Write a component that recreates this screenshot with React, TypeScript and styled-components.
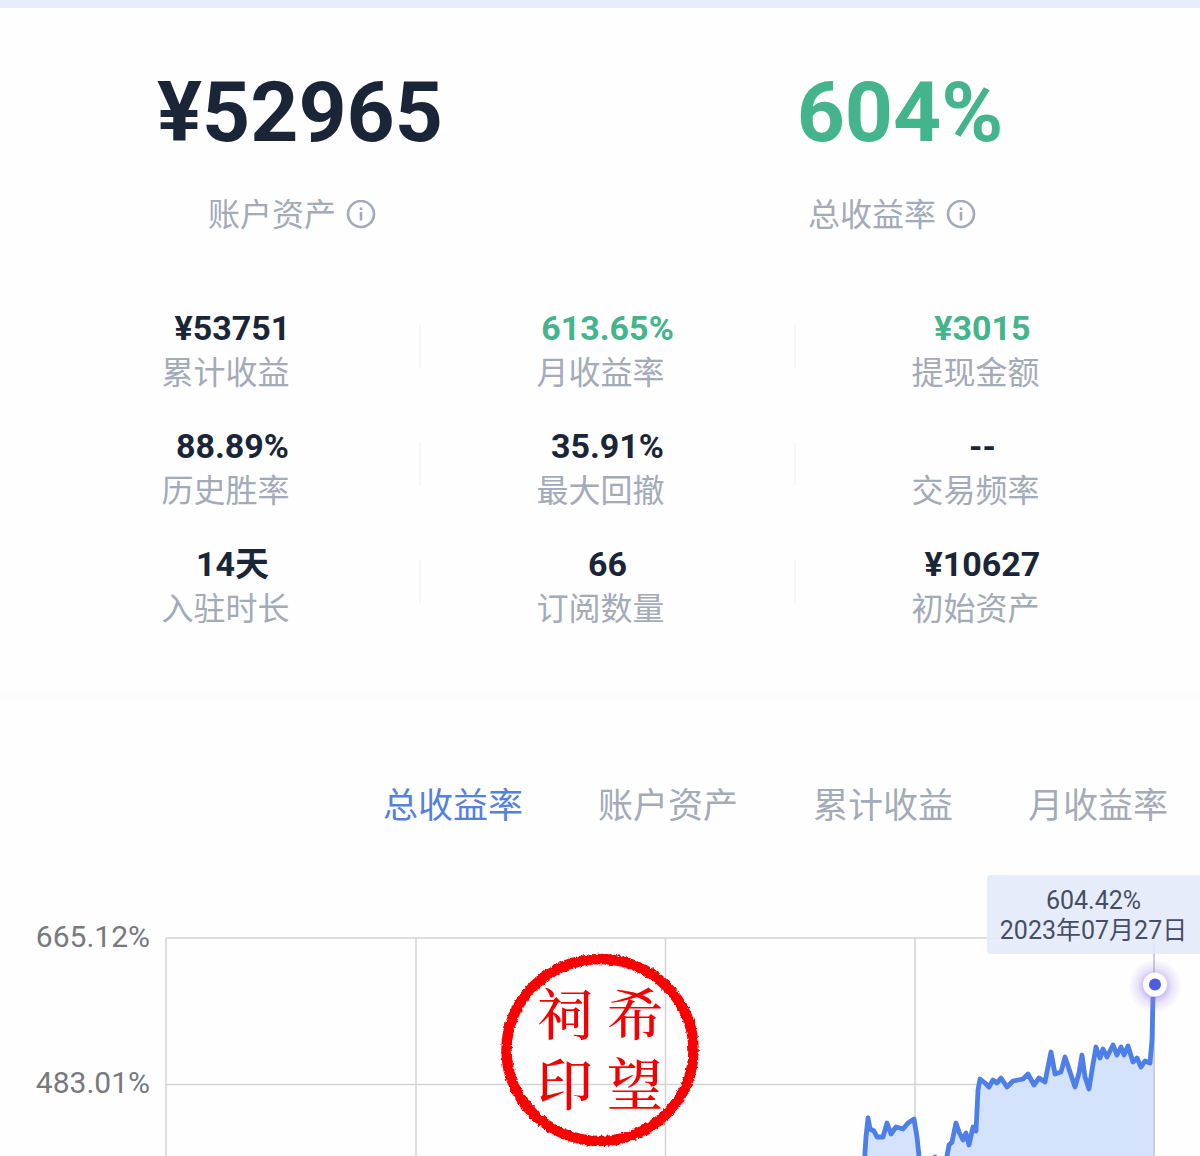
import React from "react";
import styled, { createGlobalStyle } from "styled-components";

const GlobalStyle = createGlobalStyle`
  * { box-sizing: border-box; }
  body {
    margin: 0;
    background: #fefefe;
    font-family: Roboto, "Noto Sans CJK SC", sans-serif;
    overflow-x: hidden;
  }
`;

const ink = "#1a2638";
const green = "#43b48c";
const muted = "#a3aab8";
const blue = "#5580e0";
const lineBlue = "#4d7fe8";

const Page = styled.main`
  border-top: 8px solid #e8edfb;
  overflow: hidden;
`;

const Summary = styled.section`
  display: grid;
  grid-template-columns: 1fr 1fr;
  padding-top: 55px;
`;

const SummaryItem = styled.div`
  display: flex;
  flex-direction: column;
  align-items: center;
`;

const BigValue = styled.strong<{ $color: string }>`
  font-size: 84px;
  line-height: 100px;
  font-weight: 700;
  color: ${(p) => p.$color};
`;

const SummaryLabel = styled.div`
  display: flex;
  align-items: center;
  gap: 10px;
  margin-top: 28px;
  padding-right: 16px;
  font-size: 32px;
  line-height: 48px;
  font-weight: 400;
  color: ${muted};
`;

const InfoButton = styled.button`
  display: flex;
  padding: 0;
  border: 0;
  background: none;
  color: inherit;
`;

const Stats = styled.section`
  display: grid;
  grid-template-columns: repeat(3, 1fr);
  row-gap: 28px;
  padding: 67px 30px 0 45px;
`;

const Stat = styled.div`
  position: relative;
  display: flex;
  flex-direction: column;
  align-items: center;

  &:not(:nth-child(3n))::after {
    content: "";
    position: absolute;
    right: -1px;
    top: 18px;
    width: 2px;
    height: 44px;
    background: #f7f7f9;
  }
`;

const StatValue = styled.strong<{ $color: string }>`
  font-size: 34px;
  line-height: 44px;
  font-weight: 700;
  color: ${(p) => p.$color};
`;

const StatLabel = styled.span`
  padding-right: 14px;
  font-size: 32px;
  line-height: 46px;
  font-weight: 400;
  color: ${muted};
`;

const Performance = styled.section`
  margin-top: 60px;
  border-top: 10px solid #fdfdfd;
`;

const Tabs = styled.nav`
  display: flex;
  justify-content: flex-end;
  gap: 75px;
  padding: 81px 32px 0 0;
`;

const Tab = styled.button<{ $active: boolean }>`
  padding: 0;
  border: 0;
  background: none;
  font-family: inherit;
  font-size: 35px;
  line-height: 48px;
  font-weight: 400;
  color: ${(p) => (p.$active ? blue : muted)};
`;

const Chart = styled.div`
  position: relative;
  display: flex;
  margin-top: 107px;
`;

const Axis = styled.div`
  display: flex;
  flex-direction: column;
  gap: 106px;
  width: 166px;
  height: 218px;
  margin-top: -21px;
  padding-right: 16px;
  text-align: right;
  font-size: 30px;
  line-height: 40px;
  color: #77797f;
`;

const Plot = styled.svg`
  display: block;
  flex: 1;
  min-width: 0;
  height: 218px;
  overflow: visible;
`;

const Tooltip = styled.div`
  position: absolute;
  top: -63px;
  right: 0;
  width: 213px;
  padding: 11px 0 8px;
  border-radius: 4px 0 0 4px;
  background: rgba(228, 234, 250, 0.9);
  text-align: center;
  white-space: nowrap;
  font-size: 25px;
  line-height: 30px;
  color: #454f63;
`;

const Stamp = styled.div`
  position: absolute;
  left: 50%;
  top: 12px;
  width: 200px;
  height: 200px;
  margin-left: -100px;
`;

const StampRing = styled.svg`
  position: absolute;
  inset: 0;
`;

const StampText = styled.div`
  position: relative;
  display: grid;
  grid-template-columns: 58px 58px;
  gap: 12px;
  justify-content: center;
  padding-top: 37px;
  text-align: center;
  font-family: "Liberation Serif", "Noto Serif CJK SC", "Noto Sans CJK SC", serif;
  font-size: 56px;
  line-height: 58px;
  font-weight: 500;
  color: #f50000;
`;

const StampGlyph = styled.span`
  display: block;
  height: 58px;
`;

const stats = [
  { label: "累计收益", value: "¥53751", color: ink },
  { label: "月收益率", value: "613.65%", color: green },
  { label: "提现金额", value: "¥3015", color: green },
  { label: "历史胜率", value: "88.89%", color: ink },
  { label: "最大回撤", value: "35.91%", color: ink },
  { label: "交易频率", value: "--", color: ink },
  { label: "入驻时长", value: "14天", color: ink },
  { label: "订阅数量", value: "66", color: ink },
  { label: "初始资产", value: "¥10627", color: ink },
];

const tabs = ["总收益率", "账户资产", "累计收益", "月收益率"];

const line =
  "698,230 700,199 702,180 704,191 708,193 711,199 717,199 721,185 725,196 730,189 737,191 742,185 748,181 751,199 753,218 " +
  "757,232 764,224 769,219 776,226 781,218 783,207 786,204 790,185 793,194 797,202 800,195 803,207 807,189 810,193 811,172 812,152 814,141 " +
  "819,145 823,149 827,142 831,145 835,140 841,149 847,143 852,142 857,141 862,136 868,147 873,140 879,144 882,129 885,114 " +
  "889,136 895,134 899,119 904,134 909,149 913,135 916,117 919,139 923,151 926,132 930,109 934,120 937,111 941,119 947,107 " +
  "951,117 955,109 958,117 962,108 967,124 971,120 975,129 979,123 984,125 986,102 987,59";

function Info({ about }: { about: string }) {
  return (
    <InfoButton type="button" aria-label={about}>
      <svg width="30" height="30" viewBox="0 0 30 30" fill="none" stroke="currentColor">
        <circle cx="15" cy="14" r="13" strokeWidth="2.6" />
        <path d="M15 12v8.5" strokeWidth="2.6" />
        <path d="M15 7.4v2.6" strokeWidth="2.6" />
      </svg>
    </InfoButton>
  );
}

export default function App() {
  const [active, setActive] = React.useState(tabs[0]);
  return (
    <Page>
      <GlobalStyle />
      <Summary>
        <SummaryItem>
          <BigValue $color={ink}>¥52965</BigValue>
          <SummaryLabel>
            账户资产
            <Info about="账户资产" />
          </SummaryLabel>
        </SummaryItem>
        <SummaryItem>
          <BigValue $color={green}>604%</BigValue>
          <SummaryLabel>
            总收益率
            <Info about="总收益率" />
          </SummaryLabel>
        </SummaryItem>
      </Summary>

      <Stats>
        {stats.map((s) => (
          <Stat key={s.label}>
            <StatValue $color={s.color}>{s.value}</StatValue>
            <StatLabel>{s.label}</StatLabel>
          </Stat>
        ))}
      </Stats>

      <Performance>
        <Tabs>
          {tabs.map((t) => (
            <Tab key={t} type="button" $active={t === active} onClick={() => setActive(t)}>
              {t}
            </Tab>
          ))}
        </Tabs>
        <Chart>
          <Axis>
            <span>665.12%</span>
            <span>483.01%</span>
          </Axis>
          <Plot viewBox="0 0 1034 218" preserveAspectRatio="none">
            <defs>
              <radialGradient id="glow">
                <stop offset="0.4" stopColor="#8f74e8" stopOpacity="0.5" />
                <stop offset="0.65" stopColor="#a08ae8" stopOpacity="0.22" />
                <stop offset="1" stopColor="#a08ae8" stopOpacity="0" />
              </radialGradient>
            </defs>
            <g stroke="#d4d4d6" strokeWidth="1.5">
              <path d="M0 0H988M0 146.5H988" />
              <path d="M0 0V218M250 0V218M499.5 0V218M749 0V218M988 0V218" />
            </g>
            <polygon points={`${line} 988,59 988,230`} fill="#d5e2fb" />
            <path d="M988 0V218" stroke="#c3c8d8" strokeWidth="1.5" />
            <polyline points={line} fill="none" stroke={lineBlue} strokeWidth="4.8" strokeLinejoin="round" />
            <circle cx="989" cy="48" r="27" fill="url(#glow)" />
            <circle cx="989" cy="46.5" r="12" fill="#fff" />
            <circle cx="989" cy="46.5" r="6" fill="#4a5fe0" />
          </Plot>
          <Tooltip>
            <div>604.42%</div>
            <div>2023年07月27日</div>
          </Tooltip>
          <Stamp>
            <StampRing width="200" height="200" viewBox="0 0 200 200">
              <filter id="rough" x="-5%" y="-5%" width="110%" height="110%">
                <feTurbulence type="fractalNoise" baseFrequency="0.3" numOctaves="3" seed="4" />
                <feDisplacementMap in="SourceGraphic" scale="4" xChannelSelector="R" yChannelSelector="G" />
              </filter>
              <ellipse cx="100" cy="100" rx="93.5" ry="91" fill="none" stroke="#fb0000" strokeWidth="10.5" filter="url(#rough)" />
            </StampRing>
            <StampText>
              <StampGlyph>祠</StampGlyph>
              <StampGlyph>希</StampGlyph>
              <StampGlyph>印</StampGlyph>
              <StampGlyph>望</StampGlyph>
            </StampText>
          </Stamp>
        </Chart>
      </Performance>
    </Page>
  );
}
